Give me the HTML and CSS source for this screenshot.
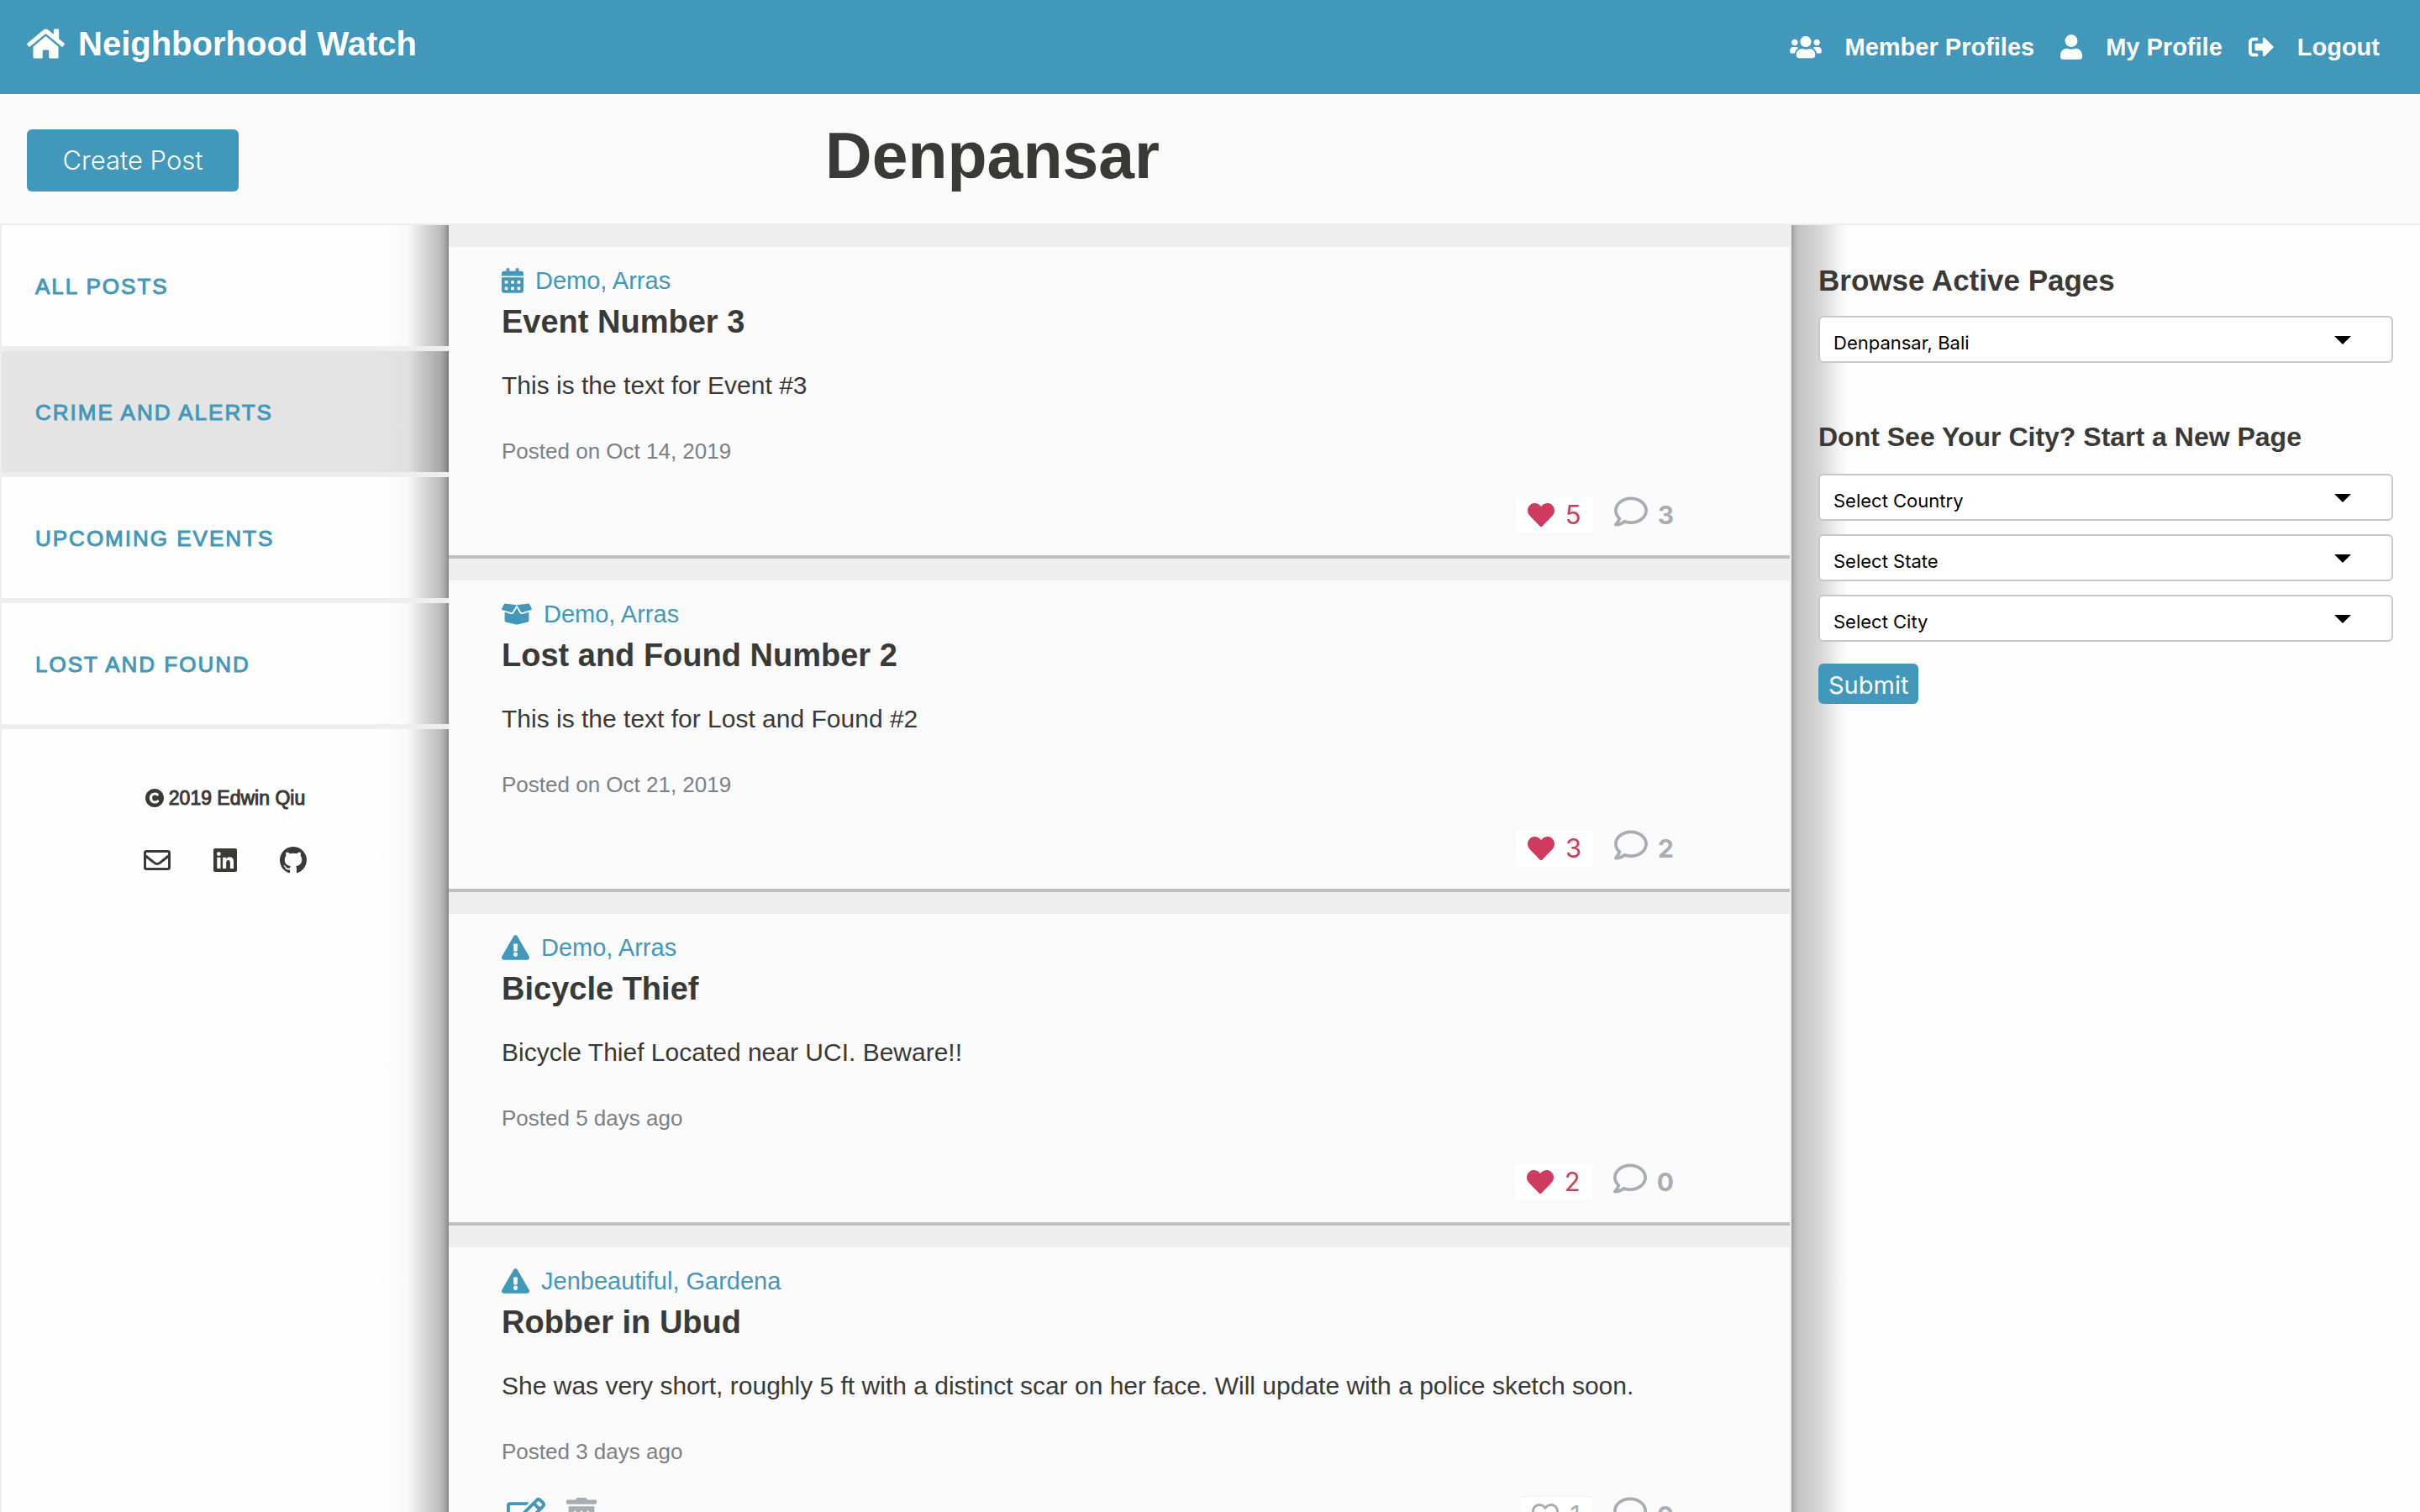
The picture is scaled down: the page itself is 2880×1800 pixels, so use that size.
FILE: index.html
```html
<!DOCTYPE html>
<html lang="en">
<head>
<meta charset="utf-8">
<meta name="viewport" content="width=device-width, initial-scale=1">
<title>Neighborhood Watch</title>
<link rel="stylesheet" href="styles.css">
</head>
<body>
<svg class="sprite" aria-hidden="true">
  <symbol id="home" viewBox="0 32 576 448"><path d="M280.37 148.26L96 300.11V464a16 16 0 0 0 16 16l112.06-.29a16 16 0 0 0 15.92-16V368a16 16 0 0 1 16-16h64a16 16 0 0 1 16 16v95.64a16 16 0 0 0 16 16.05L464 480a16 16 0 0 0 16-16V300L295.67 148.26a12.19 12.19 0 0 0-15.3 0zM571.6 251.47L488 182.56V44.05a12 12 0 0 0-12-12h-56a12 12 0 0 0-12 12v72.61L318.47 43a48 48 0 0 0-61 0L4.34 251.47a12 12 0 0 0-1.6 16.9l25.5 31A12 12 0 0 0 45.15 301l235.22-193.74a12.19 12.19 0 0 1 15.3 0L530.9 301a12 12 0 0 0 16.9-1.6l25.5-31a12 12 0 0 0-1.7-16.93z"/></symbol>
  <symbol id="users" viewBox="0 0 640 512"><path d="M96 224c35.3 0 64-28.7 64-64s-28.7-64-64-64-64 28.7-64 64 28.7 64 64 64zm448 0c35.3 0 64-28.7 64-64s-28.7-64-64-64-64 28.7-64 64 28.7 64 64 64zm32 32h-64c-17.6 0-33.5 7.1-45.1 18.6 40.3 22.1 68.9 62 75.1 109.4h66c17.7 0 32-14.3 32-32v-32c0-35.3-28.7-64-64-64zm-256 0c61.9 0 112-50.1 112-112S381.9 32 320 32 208 82.1 208 144s50.1 112 112 112zm76.8 32h-8.3c-20.8 10-43.9 16-68.5 16s-47.6-6-68.5-16h-8.3C179.6 288 128 339.6 128 403.2V432c0 26.5 21.5 48 48 48h288c26.5 0 48-21.5 48-48v-28.8c0-63.6-51.6-115.2-115.2-115.2zm-223.7-13.4C161.5 263.1 145.6 256 128 256H64c-35.3 0-64 28.7-64 64v32c0 17.7 14.3 32 32 32h65.9c6.3-47.4 34.9-87.3 75.2-109.4z"/></symbol>
  <symbol id="user" viewBox="0 0 448 512"><path d="M224 256c70.7 0 128-57.3 128-128S294.7 0 224 0 96 57.3 96 128s57.3 128 128 128zm89.6 32h-16.7c-22.2 10.2-46.9 16-72.9 16s-50.6-5.8-72.9-16h-16.7C60.2 288 0 348.2 0 422.4V464c0 26.5 21.5 48 48 48h352c26.5 0 48-21.5 48-48v-41.6c0-74.2-60.2-134.4-134.4-134.4z"/></symbol>
  <symbol id="sign-out" viewBox="0 0 512 512"><path d="M497 273L329 441c-15 15-41 4.5-41-17v-96H152c-13.3 0-24-10.7-24-24v-96c0-13.3 10.7-24 24-24h136V88c0-21.4 25.9-32 41-17l168 168c9.3 9.4 9.3 24.6 0 34zM192 436v-40c0-6.6-5.4-12-12-12H96c-17.7 0-32-14.3-32-32V160c0-17.7 14.3-32 32-32h84c6.6 0 12-5.4 12-12V76c0-6.6-5.4-12-12-12H96c-53 0-96 43-96 96v192c0 53 43 96 96 96h84c6.6 0 12-5.4 12-12z"/></symbol>
  <symbol id="calendar" viewBox="0 0 448 512"><path fill-rule="evenodd" d="M400 64h-48V16c0-8.8-7.2-16-16-16h-32c-8.8 0-16 7.2-16 16v48H160V16c0-8.8-7.2-16-16-16h-32c-8.8 0-16 7.2-16 16v48H48C21.5 64 0 85.5 0 112v48h448v-48c0-26.5-21.5-48-48-48zM0 464c0 26.5 21.5 48 48 48h352c26.5 0 48-21.5 48-48V192H0zM76 256h40a12 12 0 0 1 12 12v40a12 12 0 0 1-12 12H76a12 12 0 0 1-12-12v-40a12 12 0 0 1 12-12zM204 256h40a12 12 0 0 1 12 12v40a12 12 0 0 1-12 12h-40a12 12 0 0 1-12-12v-40a12 12 0 0 1 12-12zM332 256h40a12 12 0 0 1 12 12v40a12 12 0 0 1-12 12h-40a12 12 0 0 1-12-12v-40a12 12 0 0 1 12-12zM76 384h40a12 12 0 0 1 12 12v40a12 12 0 0 1-12 12H76a12 12 0 0 1-12-12v-40a12 12 0 0 1 12-12zM204 384h40a12 12 0 0 1 12 12v40a12 12 0 0 1-12 12h-40a12 12 0 0 1-12-12v-40a12 12 0 0 1 12-12zM332 384h40a12 12 0 0 1 12 12v40a12 12 0 0 1-12 12h-40a12 12 0 0 1-12-12v-40a12 12 0 0 1 12-12z"/></symbol>
  <symbol id="box-open" viewBox="0 0 640 512"><path d="M425.7 256c-16.9 0-32.8-9-41.4-23.4L320 126l-64.2 106.6c-8.7 14.5-24.6 23.5-41.5 23.5-4.5 0-9-.6-13.3-1.9L64 215v178c0 14.7 10 27.5 24.2 31l216.2 54.1c10.2 2.5 20.9 2.5 31 0L551.8 424c14.2-3.6 24.2-16.4 24.2-31V215l-137 39.1c-4.3 1.3-8.8 1.9-13.3 1.9zm212.6-112.2L586.8 41c-3.1-6.2-9.8-9.8-16.7-8.9L320 64l91.7 152.1c3.8 6.3 11.4 9.3 18.5 7.3l197.9-56.5c9.9-2.9 14.7-13.9 10.2-23.1zM53.2 41L1.7 143.8c-4.6 9.2.3 20.2 10.1 23l197.9 56.5c7.1 2 14.7-1 18.5-7.3L320 64 69.8 32.1c-6.9-.8-13.5 2.7-16.6 8.9z"/></symbol>
  <symbol id="alert" viewBox="0 0 576 512"><path d="M569.517 440.013C587.975 472.007 564.806 512 527.94 512H48.054c-36.937 0-59.999-40.055-41.577-71.987L246.423 23.985c18.467-32.009 64.72-31.951 83.154 0l239.94 416.028zM288 354c-25.405 0-46 20.595-46 46s20.595 46 46 46 46-20.595 46-46-20.595-46-46-46zm-43.673-165.346l7.418 136c.347 6.364 5.609 11.346 11.982 11.346h48.546c6.373 0 11.635-4.982 11.982-11.346l7.418-136c.375-6.874-5.098-12.654-11.982-12.654h-63.383c-6.884 0-12.356 5.78-11.981 12.654z"/></symbol>
  <symbol id="heart" viewBox="0 0 512 512"><path d="M462.3 62.6C407.5 15.9 326 24.3 275.7 76.2L256 96.5l-19.7-20.3C186.1 24.3 104.5 15.9 49.7 62.6c-62.8 53.6-66.1 149.8-9.9 207.9l193.5 199.8c12.5 12.9 32.8 12.9 45.3 0l193.5-199.8c56.3-58.1 53-154.3-9.8-207.9z"/></symbol>
  <symbol id="heart-outline" viewBox="0 0 512 512"><path d="M458.4 64.3C400.6 15.7 311.3 23 256 79.3 200.7 23 111.4 15.6 53.6 64.3-21.6 127.6-10.6 230.8 43 285.5l175.4 178.7c10 10.2 23.4 15.9 37.6 15.9 14.3 0 27.6-5.6 37.6-15.8L469 285.6c53.5-54.7 64.7-157.9-10.6-221.3zm-23.6 187.5L259.4 430.5c-2.4 2.4-4.4 2.4-6.8 0L77.2 251.8c-36.5-37.2-43.9-107.6 7.3-150.7 38.9-32.7 98.9-27.8 136.5 10.5l35 35.7 35-35.7c37.8-38.5 97.8-43.2 136.5-10.6 51.1 43.1 43.5 113.9 7.3 150.8z"/></symbol>
  <symbol id="comment" viewBox="0 0 512 512"><path d="M256 32C114.6 32 0 125.1 0 240c0 47.6 19.9 91.2 52.9 126.3C38 405.7 7 439.1 6.5 439.5c-6.6 7-8.4 17.2-4.6 26S14.4 480 24 480c61.5 0 110-25.7 139.1-46.3C192 442.8 223.2 448 256 448c141.4 0 256-93.1 256-208S397.4 32 256 32zm0 368c-26.7 0-53.1-4.1-78.4-12.1l-22.7-7.2-19.5 13.8c-14.3 10.1-33.9 21.4-57.5 29 7.3-12.1 14.4-25.7 19.9-40.2l10.6-28.1-20.6-21.8C69.7 314.1 48 282.2 48 240c0-88.2 93.3-160 208-160s208 71.8 208 160-93.3 160-208 160z"/></symbol>
  <symbol id="edit" viewBox="0 0 576 512"><path d="M402.3 344.9l32-32c5-5 13.7-1.5 13.7 5.7V464c0 26.5-21.5 48-48 48H48c-26.5 0-48-21.5-48-48V112c0-26.5 21.5-48 48-48h273.5c7.1 0 10.7 8.6 5.7 13.7l-32 32c-1.5 1.5-3.5 2.3-5.7 2.3H48v352h352V350.5c0-2.1.8-4.1 2.3-5.6zm156.6-201.8L296.3 405.7l-90.4 10c-26.2 2.9-48.5-19.2-45.6-45.6l10-90.4L432.9 17.1c22.9-22.9 59.9-22.9 82.7 0l43.2 43.2c22.9 22.9 22.9 60 .1 82.8zM460.1 174L402 115.9 216.2 301.8l-7.3 65.3 65.3-7.3L460.1 174zm64.8-79.7l-43.2-43.2c-4.1-4.1-10.8-4.1-14.8 0L436 82l58.1 58.1 30.9-30.9c4-4.2 4-10.8-.1-14.9z"/></symbol>
  <symbol id="trash" viewBox="0 0 448 512"><path d="M32 464a48 48 0 0 0 48 48h288a48 48 0 0 0 48-48V128H32zm272-256a16 16 0 0 1 32 0v224a16 16 0 0 1-32 0zm-96 0a16 16 0 0 1 32 0v224a16 16 0 0 1-32 0zm-96 0a16 16 0 0 1 32 0v224a16 16 0 0 1-32 0zM432 32H312l-9.4-18.7A24 24 0 0 0 281.1 0H166.8a23.72 23.72 0 0 0-21.4 13.3L136 32H16A16 16 0 0 0 0 48v32a16 16 0 0 0 16 16h416a16 16 0 0 0 16-16V48a16 16 0 0 0-16-16z"/></symbol>
  <symbol id="copyright" viewBox="8 8 496 496"><path d="M256 8C119.033 8 8 119.033 8 256s111.033 248 248 248 248-111.033 248-248S392.967 8 256 8zm117.134 346.753c-1.592 1.867-39.776 45.731-109.851 45.731-84.692 0-144.484-63.26-144.484-145.567 0-81.303 62.004-143.401 143.762-143.401 66.957 0 101.965 37.315 103.422 38.904a12 12 0 0 1 1.238 14.623l-22.38 34.655c-4.049 6.267-12.774 7.351-18.234 2.295-.233-.214-26.529-23.88-61.88-23.88-46.116 0-73.916 33.575-73.916 76.082 0 39.602 25.514 79.692 74.277 79.692 38.697 0 65.28-28.338 65.544-28.625 5.132-5.565 14.059-5.033 18.508 1.053l24.547 33.572a12.001 12.001 0 0 1-.553 14.866z"/></symbol>
  <symbol id="envelope" viewBox="0 0 512 512"><path d="M464 64H48C21.49 64 0 85.49 0 112v288c0 26.51 21.49 48 48 48h416c26.51 0 48-21.49 48-48V112c0-26.51-21.49-48-48-48zm0 48v40.805c-22.422 18.259-58.168 46.651-134.587 106.49-16.841 13.247-50.201 45.072-73.413 44.701-23.208.375-56.579-31.459-73.413-44.701C106.18 199.465 70.425 171.067 48 152.805V112h416zM48 400V214.398c22.914 18.251 55.409 43.862 104.938 82.646 21.857 17.205 60.134 55.186 103.062 54.955 42.717.231 80.509-37.199 103.053-54.947 49.528-38.783 82.032-64.401 104.947-82.653V400H48z"/></symbol>
  <symbol id="linkedin" viewBox="0 0 448 512"><path d="M416 32H31.9C14.3 32 0 46.5 0 64.3v383.4C0 465.5 14.3 480 31.9 480H416c17.6 0 32-14.5 32-32.3V64.3c0-17.8-14.4-32.3-32-32.3zM135.4 416H69V202.2h66.5V416zm-33.2-243c-21.3 0-38.5-17.3-38.5-38.5S80.9 96 102.2 96c21.2 0 38.5 17.3 38.5 38.5 0 21.3-17.2 38.5-38.5 38.5zm282.1 243h-66.4V312c0-24.8-.5-56.7-34.5-56.7-34.6 0-39.9 27-39.9 54.9V416h-66.4V202.2h63.7v29.2h.9c8.9-16.8 30.6-34.5 62.9-34.5 67.2 0 79.7 44.3 79.7 101.9V416z"/></symbol>
  <symbol id="github" viewBox="0 0 16 16"><path d="M8 0C3.58 0 0 3.58 0 8c0 3.54 2.29 6.53 5.47 7.59.4.07.55-.17.55-.38 0-.19-.01-.82-.01-1.49-2.01.37-2.53-.49-2.69-.94-.09-.23-.48-.94-.82-1.13-.28-.15-.68-.52-.01-.53.63-.01 1.08.58 1.23.82.72 1.21 1.87.87 2.33.66.07-.52.28-.87.51-1.07-1.78-.2-3.64-.89-3.64-3.95 0-.87.31-1.59.82-2.15-.08-.2-.36-1.02.08-2.12 0 0 .67-.21 2.2.82.64-.18 1.32-.27 2-.27.68 0 1.36.09 2 .27 1.53-1.04 2.2-.82 2.2-.82.44 1.1.16 1.92.08 2.12.51.56.82 1.27.82 2.15 0 3.07-1.87 3.75-3.65 3.95.29.25.54.73.54 1.48 0 1.07-.01 1.93-.01 2.2 0 .21.15.46.55.38A8.013 8.013 0 0 0 16 8c0-4.42-3.58-8-8-8z"/></symbol>
</svg>

<header class="topbar">
  <a class="brand" href="#"><svg class="brand-icon" aria-hidden="true"><use href="#home"/></svg>Neighborhood Watch</a>
  <nav class="topnav">
    <a class="topnav-link" href="#"><svg class="icon icon-wide" aria-hidden="true"><use href="#users"/></svg>Member Profiles</a>
    <a class="topnav-link" href="#"><svg class="icon icon-narrow" aria-hidden="true"><use href="#user"/></svg>My Profile</a>
    <a class="topnav-link" href="#"><svg class="icon" aria-hidden="true"><use href="#sign-out"/></svg>Logout</a>
  </nav>
</header>

<section class="pagehead">
  <button class="create" type="button">Create Post</button>
  <h1 class="city">Denpansar</h1>
</section>

<div class="layout">
  <aside class="sidebar">
    <nav class="filters">
      <a class="filter" href="#">ALL POSTS</a>
      <a class="filter filter-active" href="#">CRIME AND ALERTS</a>
      <a class="filter" href="#">UPCOMING EVENTS</a>
      <a class="filter" href="#">LOST AND FOUND</a>
    </nav>
    <footer class="credits">
      <p class="copyright"><svg class="copyright-icon" aria-hidden="true"><use href="#copyright"/></svg>2019 Edwin Qiu</p>
      <div class="socials">
        <a class="social" href="#" aria-label="Email"><svg class="social-icon" aria-hidden="true"><use href="#envelope"/></svg></a>
        <a class="social" href="#" aria-label="LinkedIn"><svg class="social-icon" aria-hidden="true"><use href="#linkedin"/></svg></a>
        <a class="social" href="#" aria-label="GitHub"><svg class="social-icon" aria-hidden="true"><use href="#github"/></svg></a>
      </div>
    </footer>
  </aside>

  <main class="feed">
    <article class="post">
      <a class="author" href="#"><svg class="icon icon-narrow" aria-hidden="true"><use href="#calendar"/></svg>Demo, Arras</a>
      <h2 class="post-title">Event Number 3</h2>
      <p class="post-text">This is the text for Event #3</p>
      <p class="post-date">Posted on Oct 14, 2019</p>
      <div class="actions">
        <button class="like liked" type="button" aria-label="Like"><svg class="like-icon" aria-hidden="true"><use href="#heart"/></svg>5</button>
        <a class="comments" href="#" aria-label="Comments"><svg class="comment-icon" aria-hidden="true"><use href="#comment"/></svg>3</a>
      </div>
    </article>
    <article class="post">
      <a class="author" href="#"><svg class="icon icon-box" aria-hidden="true"><use href="#box-open"/></svg>Demo, Arras</a>
      <h2 class="post-title">Lost and Found Number 2</h2>
      <p class="post-text">This is the text for Lost and Found #2</p>
      <p class="post-date">Posted on Oct 21, 2019</p>
      <div class="actions">
        <button class="like liked" type="button" aria-label="Like"><svg class="like-icon" aria-hidden="true"><use href="#heart"/></svg>3</button>
        <a class="comments" href="#" aria-label="Comments"><svg class="comment-icon" aria-hidden="true"><use href="#comment"/></svg>2</a>
      </div>
    </article>
    <article class="post">
      <a class="author" href="#"><svg class="icon icon-alert" aria-hidden="true"><use href="#alert"/></svg>Demo, Arras</a>
      <h2 class="post-title">Bicycle Thief</h2>
      <p class="post-text">Bicycle Thief Located near UCI. Beware!!</p>
      <p class="post-date">Posted 5 days ago</p>
      <div class="actions">
        <button class="like liked" type="button" aria-label="Like"><svg class="like-icon" aria-hidden="true"><use href="#heart"/></svg>2</button>
        <a class="comments" href="#" aria-label="Comments"><svg class="comment-icon" aria-hidden="true"><use href="#comment"/></svg>0</a>
      </div>
    </article>
    <article class="post">
      <a class="author" href="#"><svg class="icon icon-alert" aria-hidden="true"><use href="#alert"/></svg>Jenbeautiful, Gardena</a>
      <h2 class="post-title">Robber in Ubud</h2>
      <p class="post-text">She was very short, roughly 5 ft with a distinct scar on her face. Will update with a police sketch soon.</p>
      <p class="post-date">Posted 3 days ago</p>
      <div class="actions">
        <div class="owner-tools">
          <button class="tool tool-edit" type="button" aria-label="Edit post"><svg class="edit-icon" aria-hidden="true"><use href="#edit"/></svg></button>
          <button class="tool" type="button" aria-label="Delete post"><svg class="trash-icon" aria-hidden="true"><use href="#trash"/></svg></button>
        </div>
        <button class="like" type="button" aria-label="Like"><svg class="like-icon" aria-hidden="true"><use href="#heart-outline"/></svg>1</button>
        <a class="comments" href="#" aria-label="Comments"><svg class="comment-icon" aria-hidden="true"><use href="#comment"/></svg>0</a>
      </div>
    </article>
  </main>

  <aside class="browse">
    <form class="browse-form">
      <h2 class="browse-title"><label for="page">Browse Active Pages</label></h2>
      <select class="picker" id="page"><option>Denpansar, Bali</option></select>
    </form>
    <form class="browse-form">
      <h3 class="start-title">Dont See Your City? Start a New Page</h3>
      <select class="picker" aria-label="Country"><option>Select Country</option></select>
      <select class="picker" aria-label="State"><option>Select State</option></select>
      <select class="picker" aria-label="City"><option>Select City</option></select>
      <button class="submit" type="submit">Submit</button>
    </form>
  </aside>
</div>
</body>
</html>
```
FILE: styles.css
```css
:root {
  --blue: #4298ba;
  --ink: #393a37;
  --muted: #7d8085;
  --faint: #a9adb2;
  --line: #eeeeee;
  --ui: Inter, "Liberation Sans", sans-serif;
}

* {
  box-sizing: border-box;
}

body {
  display: flex;
  flex-direction: column;
  height: 100vh;
  margin: 0;
  background: #fafafa;
  color: var(--ink);
  font-family: "Liberation Sans", Arial, sans-serif;
}

h1, h2, h3, p {
  margin: 0;
}

a {
  color: inherit;
  text-decoration: none;
}

button {
  border: 0;
  padding: 0;
  font-family: var(--ui);
  cursor: pointer;
}

svg {
  flex: none;
  fill: currentColor;
}

.sprite {
  display: none;
}

.icon {
  width: 30px;
  height: 30px;
}

.icon-wide {
  width: 38px;
}

.icon-narrow {
  width: 26px;
}

.icon-box {
  width: 36px;
}

.icon-alert {
  width: 33px;
}

/* Top bar */
.topbar {
  display: flex;
  justify-content: space-between;
  align-items: flex-start;
  padding: 28px 48px 28px 32px;
  background: var(--blue);
  color: #ffffff;
  font-weight: 700;
}

.brand {
  display: flex;
  align-items: center;
  gap: 16px;
  font-size: 40px;
  line-height: 48px;
}

.brand-icon {
  width: 45px;
  height: 36px;
}

.topnav {
  display: flex;
  gap: 31px;
  font-size: 29px;
  line-height: 56px;
}

.topnav-link {
  display: flex;
  align-items: center;
  gap: 28px;
}

/* City heading */
.pagehead {
  display: grid;
  grid-template-columns: 34.1% 1fr;
  align-items: start;
  padding: 28px 0 36px;
  border-bottom: 2px solid var(--line);
}

.create {
  justify-self: start;
  width: 252px;
  height: 74px;
  margin: 14px 0 0 32px;
  padding-bottom: 2px;
  border-radius: 6px;
  background: var(--blue);
  color: #ffffff;
  font-size: 31px;
  font-weight: 300;
}

.city {
  font-size: 77px;
  line-height: 90px;
}

/* Three columns */
.layout {
  display: grid;
  flex: 1;
  grid-template-columns: 534fr 1598fr 748fr;
  min-height: 0;
}

.sidebar {
  border-left: 2px solid var(--line);
  background: linear-gradient(to left, #858585 0, #a4a4a4 4px, #bdbdbd 10px, #c8c8c8 18px, #dddddd 32px, #f2f2f2 44px, #fafafa 50px, #fefefe 86px);
}

.filters {
  display: flex;
  flex-direction: column;
}

.filter {
  padding: 2px 0 0 40px;
  border-bottom: 6px solid var(--line);
  color: var(--blue);
  font-size: 26px;
  line-height: 142px;
  letter-spacing: 2px;
  -webkit-text-stroke: 1px var(--blue);
}

.filter-active {
  background: rgba(0, 0, 0, 0.1);
  background-clip: padding-box;
}

.credits {
  display: flex;
  flex-direction: column;
  align-items: center;
  gap: 44px;
  padding-top: 68px;
}

.copyright {
  display: flex;
  align-items: center;
  gap: 6px;
  font-size: 23px;
  line-height: 28px;
  -webkit-text-stroke: 1px var(--ink);
}

.copyright-icon {
  width: 22px;
  height: 22px;
  stroke: none;
}

.socials {
  display: flex;
  gap: 49px;
}

.social {
  display: flex;
}

.social-icon {
  width: 32px;
  height: 32px;
}

/* Feed */
.feed {
  min-height: 0;
  overflow-y: auto;
  border-right: 2px solid var(--line);
  background: var(--line);
  scrollbar-width: none;
}

.post {
  display: flex;
  flex-direction: column;
  align-items: stretch;
  margin-top: 26px;
  padding: 22px 138px 27px 63px;
  border-bottom: 4px solid #c0c0c0;
  background: #fafafa;
}

.author {
  display: flex;
  align-items: center;
  align-self: flex-start;
  gap: 14px;
  color: var(--blue);
  font-size: 29px;
  line-height: 36px;
}

.post-title {
  margin-top: 7px;
  font-size: 38px;
  line-height: 48px;
}

.post-text {
  margin-top: 34px;
  font-size: 30px;
  line-height: 36px;
}

.post-date {
  margin-top: 44px;
  color: var(--muted);
  font-size: 26px;
  line-height: 32px;
}

.actions {
  display: flex;
  justify-content: flex-end;
  align-items: center;
  height: 43px;
  margin-top: 38px;
}

.like {
  display: flex;
  align-items: center;
  gap: 13px;
  height: 42px;
  padding: 0 14px;
  background: #ffffff;
  color: var(--faint);
  font-size: 31px;
}

.liked {
  color: #cf3a5f;
}

.like-icon {
  width: 32px;
  height: 32px;
}

.comments {
  display: flex;
  align-items: center;
  gap: 12px;
  margin-left: 25px;
  color: var(--faint);
  font-family: var(--ui);
  font-size: 30px;
  font-weight: 700;
  line-height: 42px;
}

.comment-icon {
  width: 40px;
  height: 40px;
  margin-bottom: 8px;
}

.owner-tools {
  display: flex;
  gap: 25px;
  margin: 0 auto 0 6px;
}

.tool {
  display: flex;
  background: none;
  color: var(--faint);
}

.tool-edit {
  color: var(--blue);
}

.edit-icon {
  width: 46px;
  height: 41px;
}

.trash-icon {
  width: 36px;
  height: 41px;
}

/* Browse column */
.browse {
  display: flex;
  flex-direction: column;
  gap: 68px;
  padding: 44px 32px 0;
  background: linear-gradient(to right, #9a9a9a 0, #bcbcbc 5px, #c8c8c8 12px, #d6d6d6 34px, #e8e8e8 48px, #f6f6f6 58px, #fefefe 68px);
}

.browse-form {
  display: flex;
  flex-direction: column;
  gap: 16px;
}

.browse-title {
  margin-bottom: 4px;
  font-size: 35px;
  line-height: 44px;
}

.start-title {
  margin-bottom: 8px;
  font-size: 32px;
  line-height: 40px;
}

.picker {
  width: 100%;
  height: 56px;
  padding: 8px 16px 0;
  border: 2px solid #c8c8c8;
  border-radius: 6px;
  appearance: none;
  background: #ffffff url("data:image/svg+xml,%3Csvg xmlns='http://www.w3.org/2000/svg' viewBox='0 0 20 10'%3E%3Cpath d='M0 0h20L10 10z'/%3E%3C/svg%3E") no-repeat right 48px top 22px / 20px 10px;
  color: #000000;
  font-family: var(--ui);
  font-size: 22px;
}

.submit {
  align-self: flex-start;
  height: 48px;
  margin-top: 10px;
  padding: 2px 12px 0;
  border-radius: 6px;
  background: var(--blue);
  color: #ffffff;
  font-size: 29px;
}
```
